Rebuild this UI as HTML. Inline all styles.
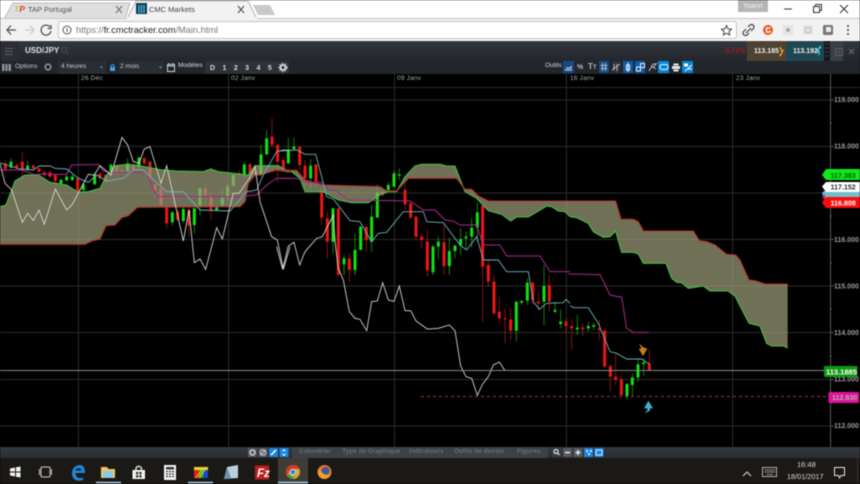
<!DOCTYPE html>
<html><head><meta charset="utf-8"><style>
html,body{margin:0;padding:0;background:#000}
#p{position:relative;width:860px;height:484px;overflow:hidden;background:#000;font-family:"Liberation Sans",sans-serif;filter:blur(.4px)}
.a{position:absolute}
.t{position:absolute;white-space:nowrap;line-height:1}
</style></head><body><div id="p">

<!-- chrome -->
<div class="a" style="left:0;top:0;width:860px;height:41px;background:#fff"></div>
<svg class="a" style="left:0;top:0" width="860" height="41">
<path d="M4 19 L13 3 H124 L130 3 L125 19Z" fill="#dfdfdf" stroke="#bdbdbd"/>
<path d="M127 19 L136 1 H248 L257 19Z" fill="#f2f2f2" stroke="#b5b5b5"/>
<path d="M253 5 H270 L275 15 H258Z" fill="#c9c9c9"/>
<rect x="0" y="18" width="860" height="22" fill="#f2f2f2"/>
<rect x="127" y="17" width="130" height="3" fill="#f2f2f2"/>
<path d="M0 18.5H127M257 18.5H860" stroke="#c4c4c4"/>
<rect x="58.500" y="21.500" width="678" height="17" rx="2" fill="#fff" stroke="#c4c4c4"/>
<rect x="136" y="3" width="11" height="11" fill="#0f3b57"/><path d="M139 5V13M141.500 5V13M144 5V13" stroke="#4fb6d8" stroke-width="1.300"/>
<path d="M116 6L122 13M122 6L116 13" stroke="#777" stroke-width="1.200"/>
<path d="M238 6L244 13M244 6L238 13" stroke="#555" stroke-width="1.200"/>
<path d="M16 30H7M11 25.500L7 30L11 34.500" fill="none" stroke="#555" stroke-width="1.300"/>
<path d="M34 30H25M30 25.500L34 30L30 34.500" fill="none" stroke="#ccc" stroke-width="1.300"/>
<path d="M50 27A5 5 0 1 0 51 31M51 25V28.500H47.500" fill="none" stroke="#555" stroke-width="1.300"/>
<circle cx="67" cy="30" r="4" fill="none" stroke="#555"/><path d="M67 28V32" stroke="#555"/>
<path d="M726.500 25.500L728 28.800L731.500 29.200L729 31.500L729.700 35L726.500 33.200L723.400 35L724 31.500L721.500 29.200L725 28.800Z" fill="none" stroke="#444"/>
<path d="M746 33L751 28M748 27L750 25Q752 23.800 753.500 25.500Q754.800 27 753 29L751 31M749 33L747 35Q745 36.200 743.500 34.500Q742.300 33 744 31L746 29" fill="none" stroke="#444" stroke-width="1.200"/>
<circle cx="768" cy="30" r="5" fill="#e8581f"/><path d="M770.500 28H766.500V32H770V30.500" fill="none" stroke="#fff" stroke-width="1.300"/>
<rect x="783" y="25" width="10" height="10" fill="#e6e6e6"/><circle cx="788" cy="30" r="2" fill="#aaa"/>
<rect x="803" y="25" width="10" height="10" fill="#e6e6e6"/><rect x="805.500" y="27.500" width="5" height="5" fill="none" stroke="#bbb"/>
<rect x="823" y="25" width="10" height="10" rx="1.500" fill="#777"/><rect x="826" y="27" width="5" height="5" fill="#eee"/>
<circle cx="848" cy="26" r="1" fill="#444"/><circle cx="848" cy="30" r="1" fill="#444"/><circle cx="848" cy="34" r="1" fill="#444"/>
<rect x="738" y="0" width="30" height="12" fill="#b5b5b5"/>
<path d="M784 9H792" stroke="#333"/>
<rect x="813.500" y="6.500" width="6" height="6" fill="none" stroke="#333"/><path d="M815.500 6.500V4.500H821.500V10.500H819.500" fill="none" stroke="#333"/>
<path d="M840 5L848 13M848 5L840 13" stroke="#333"/>
</svg>
<div class="t" style="left:14px;top:5px;font-size:8.500px;font-weight:bold;font-style:italic;color:#c4c44a">T<span style="color:#d8402e">P</span></div>
<div class="t" style="left:28px;top:5.500px;font-size:7.500px;color:#555">TAP Portugal</div>
<div class="t" style="left:149px;top:5.500px;font-size:7.500px;color:#444">CMC Markets</div>
<div class="t" style="left:743px;top:3px;font-size:7px;color:#f0f0f0">Yoann</div>
<div class="t" style="left:76px;top:25.500px;font-size:9.200px;color:#777">https://<span style="color:#222">fr.cmctracker.com</span>/Main.html</div>

<!-- app header -->
<div class="a" style="left:0;top:41px;width:860px;height:20px;background:linear-gradient(#33373f,#23262c)"></div>
<div class="a" style="left:0;top:61px;width:860px;height:13px;background:#22252b"></div>
<svg class="a" style="left:0;top:41px" width="860" height="33">
<rect x="0" y="0" width="19" height="20" fill="#2b2e35"/>
<path d="M5 7.500H13M5 10.500H13M5 13.500H13" stroke="#5d6168"/>
<circle cx="64" cy="9" r="2.500" fill="none" stroke="#4a4e55"/><path d="M66 11L68 13" stroke="#4a4e55"/>
<rect x="747" y="0" width="39" height="20" fill="#4e4232"/>
<rect x="786" y="0" width="38" height="20" fill="#1f4753"/>
<rect x="824" y="0" width="6" height="20" fill="#15171a"/><path d="M825 3H829M825 7H829M825 11H829M825 15H829" stroke="#3b3e44"/>
<rect x="830" y="0" width="13" height="20" fill="#3a3e45"/>
<rect x="835.500" y="7.500" width="7" height="7" fill="none" stroke="#5b5f66"/><path d="M839 7.500V14.500M835.500 11H842.500" stroke="#5b5f66" stroke-width=".6"/>
<path d="M849 8L854 13M854 8L849 13" stroke="#6a6d73"/>
<path d="M780 6L781.500 9.500H783L780.500 14.500L779.500 13.500" fill="none" stroke="#e8a020" stroke-width="1.400"/>
<path d="M819 14V10.500H817.500L820 5.500L821 7" fill="none" stroke="#35c8e0" stroke-width="1.400"/>
<!-- toolbar pieces -->
<rect x="2" y="23" width="9" height="7" fill="#8c8f94"/><path d="M5 23V30M8 23V30" stroke="#33363b"/>
<circle cx="48" cy="26" r="2.800" fill="none" stroke="#9a9da2" stroke-width="1.500"/>
<rect x="58" y="20" width="48" height="13" fill="#2a2d33"/>
<rect x="119" y="20" width="45" height="13" fill="#2a2d33"/>
<path d="M100 25.500L103 25.500L101.500 27.500Z" fill="#3da0e0"/><path d="M159 25.500L162 25.500L160.500 27.500Z" fill="#3da0e0"/>
<rect x="110" y="26" width="5" height="4" fill="#3da0e0"/><path d="M111 26V24.500Q112.500 22.500 114 24.500V26" fill="none" stroke="#3da0e0"/>
<rect x="167.500" y="23.500" width="7" height="7" fill="none" stroke="#cfd1d4"/><path d="M167.500 25H174.500M169 22V24M173 22V24" stroke="#cfd1d4"/>
<rect x="205" y="20" width="84" height="13" fill="#2e3138"/>
<circle cx="283" cy="26.500" r="2.500" fill="none" stroke="#e3e3e3" stroke-width="1.800"/><circle cx="283" cy="26.500" r="4.100" fill="none" stroke="#e3e3e3" stroke-width="1" stroke-dasharray="1.500 1.500"/>
<g transform="translate(563,20)">
<rect x="0" y="0" width="11" height="12" fill="#174a80"/><rect x="36" y="0" width="10" height="12" fill="#174a80"/><rect x="49" y="0" width="8" height="12" fill="#2e3138"/><rect x="60" y="0" width="10" height="12" fill="#0f5ca8"/><rect x="72" y="0" width="10" height="12" fill="#0f5ca8"/><rect x="95" y="0" width="11" height="12" fill="#0a84d8"/><rect x="119" y="0" width="11" height="12" fill="#0a84d8"/>
<path d="M3 7H8V5M2 9H9" stroke="#d8e4ef" fill="none"/>
<path d="M39.500 2V10M42.500 2V10M37.500 4.500H44.500M37.500 7.500H44.500" stroke="#c5d3e2" stroke-width=".8"/>
<path d="M49 9L57 3M51 3V9M54 3V10" stroke="#b4b7bb"/>
<rect x="63.500" y="4" width="3" height="5" fill="none" stroke="#e4eef8"/><path d="M65 1.500V11" stroke="#e4eef8"/>
<rect x="73.500" y="6" width="4" height="4" fill="none" stroke="#e4eef8"/><rect x="77.500" y="2.500" width="4" height="4" fill="none" stroke="#e4eef8"/>
<path d="M86 10L90 3L93 3L90 7L94 2M88 5L93 8" stroke="#b4b7bb" fill="none"/>
<rect x="97" y="3.500" width="8" height="5" rx="2" fill="none" stroke="#dff"/>
<rect x="109" y="5" width="8" height="3" fill="#e8e8e8"/><rect x="110.500" y="2.500" width="5" height="2" fill="#e8e8e8"/><rect x="110.500" y="8.500" width="5" height="2" fill="#e8e8e8"/>
<rect x="121" y="2.500" width="4" height="3" fill="#fff"/><path d="M122 10L129 4M125 8H129" stroke="#fff"/>
</g>
</svg>
<div class="t" style="left:25px;top:47px;font-size:8px;font-weight:bold;color:#dfe1e4">USD/JPY</div>
<div class="t" style="left:723px;top:47.500px;font-size:7px;font-weight:bold;color:#a01a1c">-3.71%</div>
<div class="t" style="left:754px;top:47.500px;font-size:7px;font-weight:bold;color:#eee">113.185</div>
<div class="t" style="left:793px;top:47.500px;font-size:7px;font-weight:bold;color:#eee">113.192</div>
<div class="t" style="left:15px;top:63.500px;font-size:6.500px;color:#c8cacd">Options</div>
<div class="t" style="left:61px;top:63.500px;font-size:6.500px;color:#c8cacd">4 heures</div>
<div class="t" style="left:120px;top:63.500px;font-size:6.500px;color:#c8cacd">2 mois</div>
<div class="t" style="left:178px;top:63px;font-size:6.500px;color:#d8dadd">Modèles</div>
<div class="t" style="left:210px;top:64.500px;font-size:7px;font-weight:bold;color:#d8dadd;word-spacing:5.500px">D 1 2 3 4 5</div>
<div class="t" style="left:545px;top:63px;font-size:6.500px;color:#d8dadd">Outils</div>
<div class="t" style="left:577px;top:63.500px;font-size:7px;font-weight:bold;color:#bbb">%</div>
<div class="t" style="left:588px;top:63px;font-size:8px;font-weight:bold;color:#bbb">T<span style="font-size:6px">T</span></div>

<!-- date bar -->
<div class="a" style="left:0;top:87px;width:860px;height:1px;background:#2a2a2a"></div>
<div class="t" style="left:81px;top:75.500px;font-size:6.500px;letter-spacing:.2px;color:#a8a8a8">26 Déc</div>
<div class="t" style="left:231px;top:75.500px;font-size:6.500px;letter-spacing:.2px;color:#a8a8a8">02 Janv</div>
<div class="t" style="left:397px;top:75.500px;font-size:6.500px;letter-spacing:.2px;color:#a8a8a8">09 Janv</div>
<div class="t" style="left:570px;top:75.500px;font-size:6.500px;letter-spacing:.2px;color:#a8a8a8">16 Janv</div>
<div class="t" style="left:736px;top:75.500px;font-size:6.500px;letter-spacing:.2px;color:#a8a8a8">23 Janv</div>

<!-- chart -->
<svg class="a" style="left:0;top:0" width="860" height="484">
<path d="M78.500 74V447M228.500 74V447M394.500 74V447M566.500 74V447M732.500 74V447" stroke="#2b2b2b" fill="none"/>
<path d="M0 100H830M0 146.500H830M0 193H830M0 239.500H830M0 286H830M0 332.500H830M0 379.500H830M0 426H830" stroke="#2b2b2b" fill="none"/>
<path d="M830.500 74V447" stroke="#5a5a5a"/>
<path d="M830 100H834M830 123H832M830 146.500H834M830 170H832M830 193H834M830 216H832M830 239.500H834M830 263H832M830 286H834M830 309H832M830 332.500H834M830 356H832M830 379.500H834M830 403H832M830 426H834" stroke="#5a5a5a"/>

<!-- candles -->
<g id="c" fill="none">
<g transform="translate(0,95) scale(.33333)">
<path stroke="#b01818" stroke-width="2.200" d="M16 195V235M50 205V222M67 172V255M100 208V225M117 218V232M133 225V248M150 225V250M166 238V265M233 248V290M300 232V258M316 238V262M350 210V235M400 208V225M433 185V210M450 200V250M465 265V310M483 260V332M500 332V400M533 345V378M567 338V425M616 268V338M633 290V375M717 225V240M750 202V235M766 225V240M816 70V158M833 145V262M850 185V225"/>
<path stroke="#ec1616" stroke-width="9" d="M16 205V222M50 210V218M67 200V225M100 212V220M117 220V230M133 232V240M150 232V245M166 240V258M233 250V288M300 236V250M316 240V258M350 212V232M400 212V222M433 190V205M450 200V245M465 268V288M483 282V330M500 335V385M533 350V375M567 345V392M616 280V300M633 305V348M717 235V240M750 208V235M766 230V238M816 125V150M833 150V200M850 195V222"/>
<path stroke="#18a818" stroke-width="2.200" d="M33 190V220M83 197V228M183 250V268M200 240V258M217 238V258M250 262V292M284 232V270M333 205V240M366 222V235M383 190V235M417 185V225M517 348V392M550 335V382M583 335V415M600 280V360M650 330V348M667 280V335M683 268V318M700 240V275M733 200V248M783 150V245M800 105V180"/>
<path stroke="#12e012" stroke-width="9" d="M33 200V218M83 212V225M183 255V265M200 245V256M217 245V255M250 268V285M284 238V268M333 210V232M366 228V232M383 205V230M417 188V215M517 352V382M550 342V378M583 340V390M600 280V332M650 335V345M667 308V330M683 275V305M700 240V272M733 208V240M783 178V240M800 130V178"/>
</g>
<g transform="translate(280,95) scale(.33333)">
<path stroke="#b01818" stroke-width="2.200" d="M59 155V225M75 195V280M108 208V275M125 278V390M142 350V490M175 338V540M208 475V540M259 395V470M308 288V305M375 265V345M392 318V370M408 362V438M425 415V460M442 405V540M492 388V540M608 332V540M625 510V540"/>
<path stroke="#ec1616" stroke-width="9" d="M59 155V210M75 212V250M108 208V260M125 290V368M142 370V440M175 340V540M208 490V525M259 395V435M308 290V300M375 285V328M392 325V368M408 365V425M425 425V435M442 440V525M492 442V512M608 332V495M625 515V540"/>
<path stroke="#18a818" stroke-width="2.200" d="M25 128V205M42 128V165M92 192V280M159 338V475M192 480V540M225 415V540M242 392V465M275 330V470M292 268V368M325 262V290M342 225V278M358 220V255M459 448V540M475 425V490M508 428V540M525 448V490M542 400V480M558 410V460M575 370V458M592 322V440"/>
<path stroke="#12e012" stroke-width="9" d="M25 165V205M42 155V162M92 212V250M159 340V440M192 490V508M225 465V525M242 395V465M275 365V440M292 292V368M325 270V285M342 235V275M358 238V242M459 455V532M475 440V455M508 468V512M525 452V468M542 432V450M558 425V430M575 398V425M592 352V398"/>
</g>
<g transform="translate(280,260) scale(.33333)">
<path stroke="#b01818" stroke-width="2.200" d="M175 0V45M208 0V68M442 0V50M492 0V20M608 0V185M625 0V80M642 45V165M658 110V190M675 145V250M692 145V240M758 65V135M775 95V150M808 45V155M858 175V222"/>
<path stroke="#ec1616" stroke-width="9" d="M175 0V12M208 0V28M442 0V30M492 0V18M608 0V20M625 15V65M642 65V160M658 155V175M675 175V178M692 178V212M758 68V120M775 125V130M808 75V125M858 185V198"/>
<path stroke="#18a818" stroke-width="2.200" d="M192 0V40M225 0V45M459 0V38M508 0V38M709 125V245M725 120V135M742 55V135M792 15V195M825 125V160M842 150V205"/>
<path stroke="#12e012" stroke-width="9" d="M192 0V10M225 0V30M459 0V30M508 0V18M709 125V212M725 123V128M742 68V122M792 78V125M825 150V155M842 185V192"/>
</g>
<g transform="translate(570,260) scale(.33333)">
<path stroke="#b01818" stroke-width="2.200" d="M5 175V270M38 190V228M88 180V240M104 208V322M121 315V395M137 280V375M154 345V408M238 268V332"/>
<path stroke="#ec1616" stroke-width="9" d="M5 198V205M38 203V208M88 205V210M104 212V320M121 318V350M137 350V360M154 358V405M238 310V330"/>
<path stroke="#18a818" stroke-width="2.200" d="M22 165V225M55 185V215M71 188V210M171 368V418M187 340V408M204 298V365M221 295V348"/>
<path stroke="#12e012" stroke-width="9" d="M22 203V208M55 198V205M71 195V200M171 372V408M187 352V375M204 313V352M221 307V312"/>
</g>
</g>

<!-- cloud fill -->
<g fill="#9f9f7c" fill-opacity=".7" stroke="none">
<path transform="translate(0,95) scale(.33333)" d="M0 335L18 330L45 258L75 240L115 240L150 262L200 270L235 292L265 290L300 280L320 240L345 212L385 208L420 212L480 224L530 228L610 230L632 222L655 230L700 235L745 240L765 212L835 212L870 232L830 225L780 240L765 240L745 265L735 320L720 335L412 337L385 362L365 368L345 390L318 392L300 432L275 438L255 448L0 448Z"/>
<path transform="translate(280,95) scale(.33333)" d="M30 226L60 250L75 290L130 290L175 315L215 323L265 323L300 300L325 290L350 290L375 245L405 213L425 208L480 208L500 213L525 213L555 290L590 310L625 347L665 358L692 378L710 366L745 366L780 345L800 333L815 335L835 348L855 350L870 365L870 318L625 318L595 303L575 283L555 283L530 250L385 250L350 288L320 288L300 275L130 270L75 255L50 226Z"/>
<path transform="translate(570,95) scale(.33333)" d="M0 318L137 318L153 373L190 373L205 380L220 408L370 408L388 437L410 440L435 450L470 478L497 480L510 495L537 555L555 557L585 567L653 567L653 759L640 753L605 753L590 745L570 693L537 685L495 603L475 588L420 588L400 573L355 580L335 563L320 562L305 550L288 505L220 505L205 477L190 472L155 472L137 408L120 425L100 427L70 410L55 385L20 368L0 365Z"/>
</g>
<!-- cloud lines -->
<g fill="none" stroke="#3fc03f">
<path transform="translate(0,95) scale(.33333)" stroke-width="3.300" d="M0 335L18 330L45 258L75 240L115 240L150 262L200 270L235 292L265 290L300 280L320 240L345 212L385 208L420 212L480 224L530 228L610 230L632 222L655 230L700 235L745 240L765 212L835 212L870 232"/>
<path transform="translate(280,95) scale(.33333)" stroke-width="3.300" d="M0 226L30 226L60 250L75 290L130 290L175 315L215 323L265 323L300 300L325 290L350 290L375 245L405 213L425 208L480 208L500 213L525 213L555 290L590 310L625 347L665 358L692 378L710 366L745 366L780 345L800 333L815 335L835 348L855 350L870 365"/>
<path transform="translate(570,95) scale(.33333)" stroke-width="3.300" d="M0 365L20 368L55 385L70 410L100 427L120 425L137 408L155 472L190 472L205 477L220 505L288 505L305 550L320 562L335 563L355 580L400 573L420 588L475 588L495 603L537 685L570 693L590 745L605 753L640 753L653 759"/>
</g>
<g fill="none" stroke="#b8302a">
<path transform="translate(0,95) scale(.33333)" stroke-width="3.300" d="M0 448L255 448L275 438L300 432L318 392L345 390L365 368L385 362L412 337L720 335L735 320L745 265L765 240L780 240L830 225L870 232"/>
<path transform="translate(280,95) scale(.33333)" stroke-width="3.300" d="M0 226L50 226L75 255L130 270L300 275L320 288L350 288L385 250L530 250L555 283L575 283L595 303L625 318L870 318"/>
<path transform="translate(570,95) scale(.33333)" stroke-width="3.300" d="M0 318L137 318L153 373L190 373L205 380L220 408L370 408L388 437L410 440L435 450L470 478L497 480L510 495L537 555L555 557L585 567L653 567"/>
</g>
<!-- magenta -->
<g fill="none" stroke="#a82a8c" stroke-width="3">
<path transform="translate(0,95) scale(.33333)" d="M0 225L65 225L100 238L200 238L215 210L295 208L310 228L330 232L440 232L470 305L720 305L770 300L800 270L830 250L870 250"/>
<path transform="translate(280,95) scale(.33333)" d="M0 250L50 250L80 262L125 262L145 285L165 285L205 315L390 318L430 345L465 345L495 375L520 378L540 390L590 390L610 450L660 450L680 483L780 483L810 530L870 530"/>
<path transform="translate(570,260) scale(.33333)" d="M-5 42L90 44L120 105L155 112L170 205L190 217L238 217"/>
</g>
<!-- teal -->
<g fill="none" stroke="#6fb0bc" stroke-width="2.700">
<path transform="translate(0,95) scale(.33333)" d="M0 203L20 210L60 222L100 225L117 213L150 213L165 220L200 222L235 250L265 262L290 240L320 258L370 250L400 225L430 225L450 245L500 290L550 290L600 345L690 348L740 290L770 285L790 240L830 170L850 165L870 165"/>
<path transform="translate(280,95) scale(.33333)" d="M0 168L50 165L75 178L107 178L125 245L140 305L160 312L210 377L240 380L275 440L295 415L320 412L370 350L430 350L440 380L490 383L510 410L540 450L560 465L590 425L610 495L655 495L680 530L745 530L760 620L778 643L800 625L850 623L858 613L870 625"/>
<path transform="translate(570,260) scale(.33333)" d="M0 137L10 143L55 143L85 190L120 275L140 280L170 297L215 297L238 312"/>
</g>
<!-- white lagging -->
<g fill="none" stroke="#d8d8d8" stroke-width="2.600">
<path transform="translate(0,95) scale(.33333)" d="M0 205L15 265L35 285L67 382L83 355L100 376L117 345L133 388L166 282L200 345L217 328L265 238L283 240L300 212L333 240L366 127L383 150L400 200L417 205L433 162L450 155L483 265L500 212L550 438L567 345L583 503L600 492L617 523L650 398L667 432L700 295L717 295L748 250L765 215L780 320L815 425L832 435L850 523L870 455"/>
<path transform="translate(280,95) scale(.33333)" d="M-10 455L8 523L25 453L42 442L59 510L75 470L110 430L127 425L160 360L165 440L175 520"/>
<path transform="translate(280,260) scale(.33333)" d="M175 25L190 60L208 155L225 175L240 178L260 212L275 125L292 123L308 68L325 120L342 124L358 78L375 152L392 152L408 183L442 207L475 205L508 195L525 212L542 318L558 350L575 355L592 406L608 372L625 350L640 315L658 306L675 332"/>
</g>
<!-- levels -->
<path d="M0 370.500H825" stroke="#8a8a8a"/>
<path d="M421 396.500H829" stroke="#a8287e" stroke-dasharray="3 3"/>
<!-- arrows -->
<g transform="translate(570,260) scale(.33333)">
<path d="M207 250L220 262L232 266L219 288L206 266L214 266Z" fill="#c8801e"/>
<path d="M235 422L249 445L240 445L240 452L224 460L232 450L232 445L222 445Z" fill="#3fb0cc"/>
</g>
<!-- axis labels -->
<g font-family="Liberation Sans,sans-serif" font-size="7" font-weight="bold" fill="#9a9a9a">
<text x="834" y="102">119.000</text><text x="834" y="148.500">118.000</text><text x="834" y="242">116.000</text><text x="834" y="288.500">115.000</text><text x="834" y="335">114.000</text><text x="834" y="381.500">113.000</text><text x="834" y="428">112.000</text>
</g>
<!-- price tags -->
<path d="M822 193L824 191H860V198H824Z" fill="#6fc0cc"/>
<path d="M822 197L825 194V200Z" fill="#c020a0"/>
<path d="M822 175L826 169H860V180H826Z" fill="#10e81a"/>
<path d="M822 202.500L826 197H860V208H826Z" fill="#ff0a0a"/>
<path d="M822 186.500L826 182H860V192H826Z" fill="#fff"/>
<g font-family="Liberation Sans,sans-serif" font-size="7.100" font-weight="bold">
<text x="830.500" y="178" fill="#0a5a0a">117.383</text>
<text x="830.500" y="189.500" fill="#333">117.152</text>
<text x="830.500" y="205.500" fill="#fff">116.808</text>
</g>
<rect x="824" y="366" width="33.500" height="11" rx="1.500" fill="#0e9a10"/>
<text x="826" y="374.500" font-family="Liberation Sans,sans-serif" font-size="7.500" font-weight="bold" fill="#fff">113.1885</text>
<rect x="828.500" y="392" width="30.500" height="11" rx="1.500" fill="#e0129c"/>
<text x="832" y="400" font-family="Liberation Sans,sans-serif" font-size="7.100" font-weight="bold" fill="#b0b0b0">112.830</text>
</svg>

<!-- bottom app bar -->
<div class="a" style="left:0;top:447px;width:860px;height:11px;background:linear-gradient(#34383f,#2a2d33)"></div>
<div class="a" style="left:292px;top:447px;width:256px;height:11px;background:#3c4047"></div>
<div class="t" style="left:299px;top:448.500px;font-size:6.500px;font-weight:bold;color:#686c73">Calendrier</div>
<div class="t" style="left:342px;top:448.500px;font-size:6.500px;font-weight:bold;color:#686c73">Type de Graphique</div>
<div class="t" style="left:409px;top:448.500px;font-size:6.500px;font-weight:bold;color:#686c73">Indicateurs</div>
<div class="t" style="left:454px;top:448.500px;font-size:6.500px;font-weight:bold;color:#686c73">Outils de dessin</div>
<div class="t" style="left:517px;top:448.500px;font-size:6.500px;font-weight:bold;color:#686c73">Figures</div>
<svg class="a" style="left:0;top:447px" width="860" height="37">
<rect x="248" y="1" width="9" height="9" fill="#55585e"/><rect x="258.500" y="1" width="9" height="9" fill="#55585e"/>
<rect x="269" y="1" width="9" height="9" fill="#1a86e0"/><rect x="279.500" y="1" width="9" height="9" fill="#1a86e0"/>
<circle cx="252.500" cy="5.500" r="2.500" fill="none" stroke="#e8e8e8" stroke-width="1.200"/>
<circle cx="263" cy="5.500" r="2.800" fill="none" stroke="#d0d0d0"/><path d="M261 7.500L265 3.500" stroke="#d0d0d0"/>
<path d="M271 8L276 3" stroke="#fff" stroke-width="1.500"/>
<path d="M282 4L284 2L286 4ZM282 7L284 9L286 7Z" fill="#fff"/>
<rect x="552" y="1" width="9" height="9" fill="#3a3e45"/><rect x="563" y="1" width="9" height="9" fill="#55585e"/><rect x="573.500" y="1" width="9" height="9" fill="#55585e"/>
<rect x="584" y="1" width="9" height="9" fill="#1a86e0"/><rect x="594.500" y="1" width="9" height="9" fill="#1a86e0"/>
<circle cx="556" cy="4.500" r="2" fill="none" stroke="#e0e0e0" stroke-width="1.200"/><path d="M557.500 6L559.500 8" stroke="#e0e0e0" stroke-width="1.200"/>
<path d="M565 5.500H570" stroke="#e8e8e8" stroke-width="1.500"/>
<path d="M575.500 5.500H580.500M578 3V8" stroke="#e8e8e8" stroke-width="1.500"/>
<rect x="586" y="3" width="2" height="2" fill="#cfe8ff"/><rect x="590" y="3" width="2" height="2" fill="#cfe8ff"/><rect x="588" y="6" width="2" height="2" fill="#cfe8ff"/>
<rect x="596" y="3" width="6" height="5" fill="none" stroke="#cfe8ff"/>
</svg>

<!-- taskbar -->
<div class="a" style="left:0;top:458px;width:860px;height:26px;background:#1b1915"></div>
<svg class="a" style="left:0;top:458px" width="860" height="26">
<rect x="278" y="0" width="30" height="26" fill="#3f3c38"/>
<path d="M96 24.500H121M188 24.500H213M278 24.500H308" stroke="#a8cbe6" stroke-width="1.500"/>
<path d="M10 10.500L15 9.500V13.500H10ZM16 9.300L20.500 8.500V13.500H16ZM10 14.500H15V18.500L10 17.500ZM16 14.500H20.500V19.500L16 18.700Z" fill="#f2f2f2"/>
<rect x="41" y="9" width="9" height="10" rx="1" fill="none" stroke="#cfcfcf"/><path d="M39.500 11V17M51.500 11V17" stroke="#cfcfcf"/>
<path d="M83.500 15H75.500C75.500 20 80 21 83 19.500V22C78 24 72 22 72 15.500C72 9 77 7 80 7C84 7 85 11 85 15M75.500 12.500H81.500C81.500 9.500 76 9.500 75.500 12.500Z" fill="#1e88d8"/>
<path d="M101 9H107L108.500 11H115V20H101Z" fill="#f0c860"/><rect x="103" y="13" width="10" height="7" fill="#8cc8e8"/>
<path d="M132.500 12H145V21H132.500Z" fill="#f2f2f2"/><path d="M136 12V10Q138.500 6.500 141.500 10V12" fill="none" stroke="#f2f2f2" stroke-width="1.300"/><rect x="136" y="14" width="2.200" height="2.200" fill="#222"/><rect x="139.300" y="14" width="2.200" height="2.200" fill="#222"/><rect x="136" y="17.200" width="2.200" height="2.200" fill="#222"/><rect x="139.300" y="17.200" width="2.200" height="2.200" fill="#222"/>
<rect x="164" y="7" width="12" height="15" fill="#f5f5f5"/><rect x="166" y="9" width="8" height="2.500" fill="#333"/><path d="M166 13.500H168M169 13.500H171M172 13.500H174M166 16H168M169 16H171M172 16H174M166 18.500H168M169 18.500H171M172 18.500H174" stroke="#333" stroke-width="1.300"/>
<rect x="194" y="9" width="14" height="3.500" fill="#e8d820"/><rect x="194" y="12" width="5" height="8" fill="#e82020"/><rect x="199" y="12" width="4.500" height="8" fill="#20b020"/><rect x="203.500" y="12" width="4.500" height="8" fill="#2040e0"/><path d="M196 20L204 9M199 20L207 9" stroke="#e8d820" stroke-width="1"/>
<path d="M227 9L238 7V20L224 21Z" fill="#b8d0dc"/><path d="M227 9L224 21L231 20Z" fill="#6a94aa"/>
<rect x="255" y="7.500" width="14" height="14" fill="#bf1c1c"/>
<text x="257" y="19" font-family="Liberation Sans,sans-serif" font-size="11.500" font-weight="bold" font-style="italic" fill="#fff">Fz</text>
<circle cx="293" cy="14" r="7" fill="#d9a826"/><path d="M293 7A7 7 0 0 0 287 17.500L290 12.500A3 3 0 0 1 293 11H299A7 7 0 0 0 293 7Z" fill="#d6362e"/><path d="M287 17.500A7 7 0 0 0 293 21L296 16A3 3 0 0 1 290 16Z" fill="#2c9c4c"/><circle cx="293" cy="14" r="2.800" fill="#3a7ee0" stroke="#eee" stroke-width=".8"/>
<circle cx="324.500" cy="14" r="7" fill="#e8742a"/><circle cx="325.500" cy="13" r="4" fill="#3a5a9c"/><path d="M319 11Q322 16 327 17Q330 17 331 14Q330.500 20 324.500 21Q318 20.500 318 14Z" fill="#f2a02c"/>
<path d="M743 18L747 14L751 18" fill="none" stroke="#d8d8d8" stroke-width="1.100"/>
<rect x="762.500" y="9.500" width="14" height="9" fill="none" stroke="#b0b0b0"/><path d="M764.500 12H775M764.500 14H775M766.500 16.500H773" stroke="#909090"/>
<path d="M834.500 9.500H844.500V17.500H841L839.500 20L838.500 17.500H834.500Z" fill="none" stroke="#e6e6e6"/>
<path d="M857.500 0V26" stroke="#333"/>
</svg>
<div class="t" style="left:797px;top:461px;font-size:7.500px;color:#dcdcdc">16:48</div>
<div class="t" style="left:787px;top:473px;font-size:7.300px;color:#dcdcdc">18/01/2017</div>

</div></body></html>
